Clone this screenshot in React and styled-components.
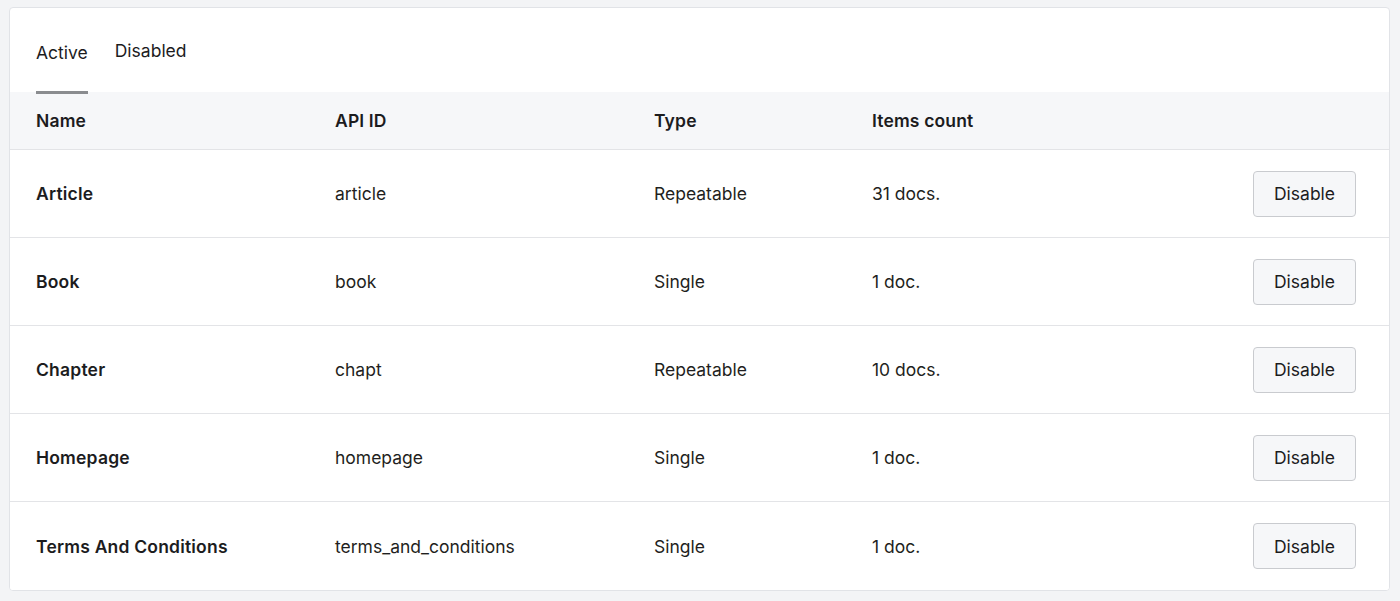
import React from "react";
import styled, { createGlobalStyle } from "styled-components";

const Global = createGlobalStyle`
  html, body { margin: 0; padding: 0; background: #f3f4f6; }
  body { font-family: Inter, "Noto Sans", sans-serif; color: #1c1c1e; -webkit-font-smoothing: antialiased; }
  * { box-sizing: border-box; }
`;

const Page = styled.div`
  padding: 7px 10px 0 9px;
  width: 1400px;
`;

const Card = styled.div`
  width: 1381px;
  background: #fff;
  border: 1px solid #e1e3e7;
  border-radius: 4px;
  overflow: hidden;
`;

const TabBar = styled.div`
  display: flex;
  align-items: flex-end;
  gap: 27px;
  height: 84px;
  padding-left: 26px;
`;

const Tab = styled.div`
  position: relative;
  font-size: 17.5px;
  color: #1c1c1e;
  padding-bottom: ${(p) => (p.$active ? 29 : 31)}px;
  &::after {
    content: "";
    display: ${(p) => (p.$active ? "block" : "none")};
    position: absolute;
    left: 0;
    right: 0;
    bottom: -2px;
    height: 3px;
    background: #8a8c8f;
    z-index: 1;
  }
`;

const Row = styled.div`
  display: grid;
  grid-template-columns: 299px 319px 218px 1fr auto;
  align-items: center;
  padding: 0 33px 0 26px;
  height: ${(p) => (p.$head ? 58 : 88)}px;
  background: ${(p) => (p.$head ? "#f6f7f9" : "#fff")};
  border-bottom: ${(p) => (p.$last ? "none" : "1px solid #e3e4e7")};
  font-size: 17.5px;
`;

const HeadCell = styled.div`
  font-weight: 600;
  letter-spacing: 0.15px;
  color: #1c1c1e;
`;

const NameCell = styled.div`
  font-weight: 600;
  letter-spacing: 0.2px;
  color: #1c1c1e;
`;

const Cell = styled.div`
  color: #1f1f21;
`;

const Button = styled.button`
  width: 103px;
  height: 46px;
  background: #f6f7f9;
  border: 1px solid #c9cbcf;
  border-radius: 4px;
  font-family: inherit;
  font-size: 17.5px;
  color: #1c1c1e;
  cursor: pointer;
`;

const rows = [
  ["Article", "article", "Repeatable", "31 docs."],
  ["Book", "book", "Single", "1 doc."],
  ["Chapter", "chapt", "Repeatable", "10 docs."],
  ["Homepage", "homepage", "Single", "1 doc."],
  ["Terms And Conditions", "terms_and_conditions", "Single", "1 doc."],
];

export default function App() {
  return (
    <>
      <Global />
      <Page>
        <Card>
          <TabBar>
            <Tab $active>Active</Tab>
            <Tab>Disabled</Tab>
          </TabBar>
          <Row $head>
            <HeadCell>Name</HeadCell>
            <HeadCell>API ID</HeadCell>
            <HeadCell>Type</HeadCell>
            <HeadCell>Items count</HeadCell>
            <div />
          </Row>
          {rows.map((r, i) => (
            <Row key={r[0]} $last={i === rows.length - 1}>
              <NameCell>{r[0]}</NameCell>
              <Cell>{r[1]}</Cell>
              <Cell>{r[2]}</Cell>
              <Cell>{r[3]}</Cell>
              <Button>Disable</Button>
            </Row>
          ))}
        </Card>
      </Page>
    </>
  );
}
